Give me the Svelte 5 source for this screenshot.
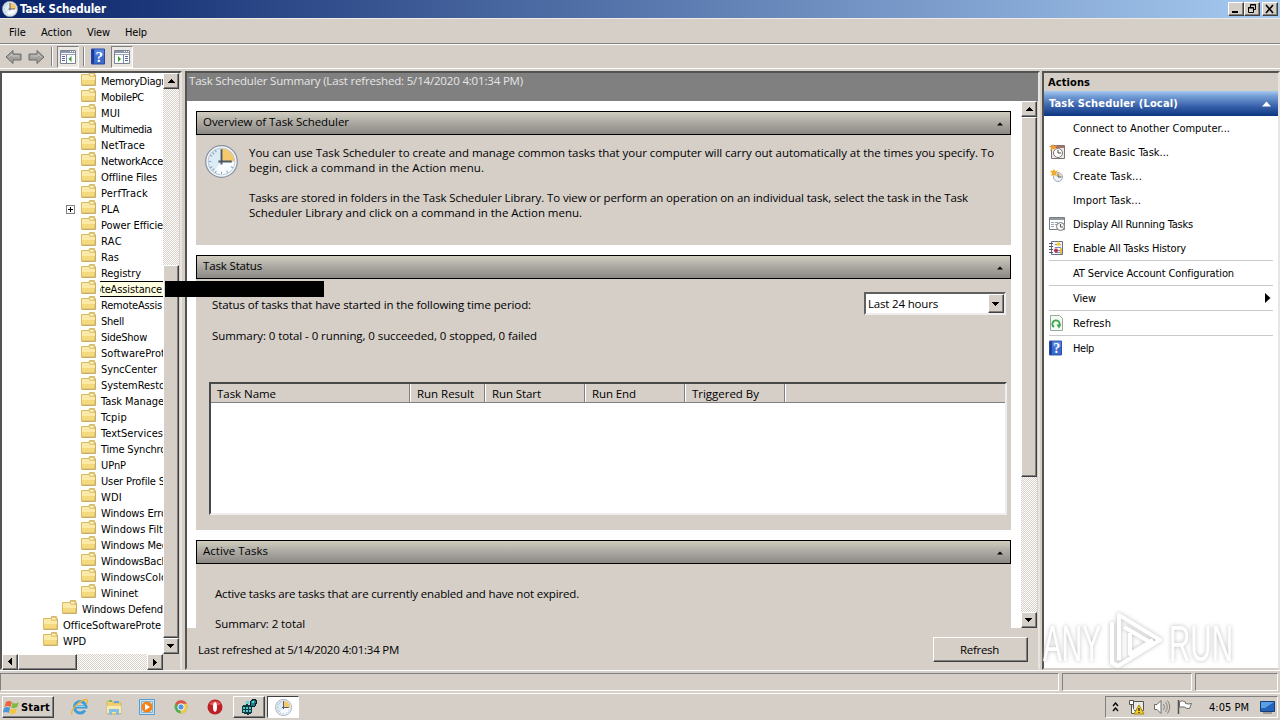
<script>
	const tree = [
		['MemoryDiagr', 64],
		['MobilePC', 43],
		['MUI', 19],
		['Multimedia', 51],
		['NetTrace', 44],
		['NetworkAcce', 62],
		['Offline Files', 56],
		['PerfTrack', 47],
		['PLA', 18],
		['Power Efficie', 62],
		['RAC', 21],
		['Ras', 18],
		['Registry', 40],
		['', 0],
		['RemoteAssis', 61],
		['Shell', 23],
		['SideShow', 46],
		['SoftwareProt', 64],
		['SyncCenter', 56],
		['SystemResto', 64],
		['Task Manage', 63],
		['Tcpip', 26],
		['TextServices', 62],
		['Time Synchro', 65],
		['UPnP', 25],
		['User Profile S', 64],
		['WDI', 21],
		['Windows Erro', 66],
		['Windows Filt', 62],
		['Windows Med', 67],
		['WindowsBack', 66],
		['WindowsColo', 66],
		['Wininet', 37],
		['Windows Defend', 81, 1],
		['OfficeSoftwareProte', 98, 0],
		['WPD', 23, 0],
	];

	const menus = [
		['File', 17],
		['Action', 31],
		['View', 23],
		['Help', 22],
	];

	const columns = [
		['Task Name', 59, 199],
		['Run Result', 57, 75],
		['Run Start', 49, 100],
		['Run End', 44, 100],
		['Triggered By', 67, 100],
	];

	const actions = [
		{ text: 'Connect to Another Computer...', width: 157 },
		{ text: 'Create Basic Task...', width: 96, icon: 'basic' },
		{ text: 'Create Task...', width: 69, icon: 'create' },
		{ text: 'Import Task...', width: 68 },
		{ text: 'Display All Running Tasks', width: 120, icon: 'running' },
		{ text: 'Enable All Tasks History', width: 113, icon: 'history' },
		{ text: 'AT Service Account Configuration', width: 161, line: true },
		{ text: 'View', width: 23, line: true, more: true },
		{ text: 'Refresh', width: 38, icon: 'refresh', line: true },
		{ text: 'Help', width: 21, icon: 'help', line: true },
	];

	// spread the letters so that a label takes the given width
	const fit = (node, width) => {
		if (!node.textContent) return;
		const natural = node.getBoundingClientRect().width;
		node.style.letterSpacing = `${(width - natural) / node.textContent.length}px`;
	};
</script>

{#snippet label(text, width)}
	<span class="label" use:fit={width}>{text}</span>
{/snippet}

{#snippet arrow(dir)}
	<svg class="arrow {dir}" width="8" height="8" viewBox="0 0 8 8" shape-rendering="crispEdges">
		<path d="M4 2h0l4 4H0z" transform="translate(0.5 0)" />
	</svg>
{/snippet}

{#snippet folder()}
	<svg class="folder" width="15" height="14" viewBox="0 0 15 14">
		<path d="M.5 2.500H8l.5-2h5l.5 2v10.500H.5z" fill="#f4d97f" stroke="#d8ba68" />
		<path d="M1 3h7.500v2H14v3H1z" fill="#faeaa6" />
		<path d="M8.500 1.500h4.500v2.500H8.500z" fill="#fff6cf" stroke="#c9a955" stroke-width=".6" />
		<path d="M.5 13.500h14V3" fill="none" stroke="#b8964a" stroke-width=".7" />
	</svg>
{/snippet}

{#snippet clock(size)}
	<svg width={size} height={size} viewBox="0 0 32 32">
		<circle cx="16" cy="16" r="15.300" fill="#f4f7fa" stroke="#8592a0" stroke-width="1.200" />
		<circle cx="16" cy="16" r="12.800" fill="#dcebf5" stroke="#b9c8d6" />
		<path d="M16 28.500A12.500 12.500 0 0 0 28.500 16H16L8 26z" fill="#f8fcff" />
		<path d="M16 16V3.500A12.500 12.500 0 0 1 28.500 16z" fill="#f5c86d" />
		<path d="M16 26v2M4 16h2M7.500 7.500 9 9M7.500 24.500 9 23M10 5l1 2M5 10l2 1M5 22l2-1M10 27l1-2M22 27l-1-2M27 22l-2-1" stroke="#829db6" />
		<path d="M16 4v15M13 16h13" stroke="#4b5968" stroke-width="1.800" />
	</svg>
{/snippet}

{#snippet help(w, h)}
	<svg width={w} height={h} viewBox="0 0 14 16">
		<path d="M.5.5h13v15H.5z" fill="#3c6bd0" stroke="#2547a0" />
		<path d="M1 1h2v14H1z" fill="#183b99" />
		<path d="M4 1h9v6H4z" fill="#5583df" />
		<text x="8.300" y="13" text-anchor="middle" font-family="Liberation Serif, serif" font-size="15" font-weight="bold" fill="#fff">?</text>
	</svg>
{/snippet}

{#snippet pane(dir)}
	<svg width="16" height="14" viewBox="0 0 16 14">
		<path d="M.5.5h15v13H.5z" fill="#fff" stroke="#7c8494" />
		<path d="M1 1h14v2H1z" fill="#8c96ad" />
		<path d="M10 1.500h1M12 1.500h1M14 1.500h1" stroke="#fff" />
		<path d="M1 4.500h14" stroke="#9ba3b8" />
		{#if dir === 'left'}
			<path d="M2 6.500h3M2 8.500h3M2 10.500h3" stroke="#5365a5" />
			<path d="M6.500 5v8" stroke="#8189a0" />
			<path d="M11.500 6v6L8.500 9z" fill="#3d9b3d" />
		{:else}
			<path d="M11 6.500h3M11 8.500h3M11 10.500h3" stroke="#5365a5" />
			<path d="M9.500 5v8" stroke="#8189a0" />
			<path d="M4 6v6l3-3z" fill="#3d9b3d" />
		{/if}
	</svg>
{/snippet}

{#snippet actionIcon(name)}
	{#if name === 'basic'}
		<svg width="16" height="16" viewBox="0 0 16 16">
			<path d="M2.500 1.500h13v13h-13z" fill="#eee9e5" stroke="#817374" />
			<path d="M3 2h12v2H3z" fill="#a87562" />
			<circle cx="9" cy="9" r="4.500" fill="#fff" stroke="#777" />
			<path d="M9 6v3h3" fill="none" stroke="#444" />
			<path d="m4 0 1 2 3-1-2 3 1 2-3-1-3 2 1-3-2-2 3 0z" fill="#efa036" />
		</svg>
	{:else if name === 'create'}
		<svg width="16" height="16" viewBox="0 0 16 16">
			<circle cx="9" cy="9" r="4.500" fill="#eef3f7" stroke="#a3abb4" />
			<path d="M9 9V5.500h1A4 4 0 0 1 12.500 9z" fill="#f1d086" />
			<path d="M9 5.500V9h3.500" fill="none" stroke="#555e69" />
			<path d="m5 1 1 2 3-.5L7 5l1 3-3-1-3 1 1-3-2-2 3-.5z" fill="#f0ac2b" />
		</svg>
	{:else if name === 'running'}
		<svg width="17" height="16" viewBox="0 0 17 16">
			<path d="M.5 1.500h15v12H.5z" fill="#fff" stroke="#777d84" />
			<path d="M1 2h14v2H1z" fill="#9399a0" />
			<path d="M2 6.500h3M6 6.500h3M2 8.500h3M6 8.500h2M2 10.500h3" stroke="#9ba4b7" />
			<circle cx="11.500" cy="10.500" r="4" fill="#f4f4f4" stroke="#777" />
			<path d="M11.500 8v3H14" fill="none" stroke="#555" />
		</svg>
	{:else if name === 'history'}
		<svg width="15" height="16" viewBox="0 0 15 16">
			<path d="M2.500 1.500h11v13h-11z" fill="#f2f4fa" stroke="#6a6e88" />
			<path d="M0 3.500h4M0 6.500h4M0 9.500h4M0 12.500h4" stroke="#55596b" />
			<path d="M6 4.500h6M6 7.500h6M6 10.500h6M6 12.500h6" stroke="#7b86bb" />
			<path d="M7 5.500 9.500 1 12 5.500z" fill="#f2ca28" />
			<circle cx="7" cy="10.500" r="2" fill="#bb3545" />
			<path d="M11 8h2v6h-2z" fill="#e5be46" />
		</svg>
	{:else if name === 'refresh'}
		<svg width="14" height="16" viewBox="0 0 14 16">
			<path d="M1.500.5h9l3 3v12h-12z" fill="#f4faf4" stroke="#9aaa9a" />
			<path d="M5 12A3.600 3.600 0 1 1 10 11" fill="none" stroke="#3fa64b" stroke-width="2" />
			<path d="M7.500 9.500h5L10 13.500z" fill="#3fa64b" />
		</svg>
	{:else if name === 'help'}
		{@render help(13, 16)}
	{/if}
{/snippet}

{#snippet cardHead(text, width)}
	<header class="card-head">
		{@render label(text, width)}
		<svg width="6" height="4" viewBox="0 0 6 4"><path d="M0 3.500 3 .5l3 3z" /></svg>
	</header>
{/snippet}

<div class="screen">
	<div class="titlebar">
		{@render clock(16)}
		<b>{@render label('Task Scheduler', 86)}</b>
		<div class="window-buttons">
			<button aria-label="Minimize" class="raised"><svg width="12" height="10"><path d="M2 7h6v2H2z" /></svg></button>
			<button aria-label="Restore" class="raised">
				<svg width="12" height="10" fill="none" stroke="#000"><path d="M4.500 3V.5h5v5H8M4 1h6M2.500 3.500h5v5h-5zM2 4h6" /></svg>
			</button>
			<button aria-label="Close" class="raised close"><svg width="12" height="10"><path d="m2 1 7 8M9 1 2 9" stroke="#000" stroke-width="1.600" /></svg></button>
		</div>
	</div>

	<nav class="menubar">
		{#each menus as [text, width]}
			{@render label(text, width)}
		{/each}
	</nav>

	<div class="toolbar">
		<svg width="17" height="16" viewBox="0 0 17 16"><path d="M1 8 8 1.500V5h8v6H8v3.500z" fill="#a3a19e" stroke="#6d6b69" /><path d="M4 8 7 5v2h7" fill="none" stroke="#c9c6c2" /></svg>
		<svg class="forward" width="17" height="16" viewBox="0 0 17 16"><path d="M16 8 9 1.500V5H1v6h8v3.500z" fill="#a3a19e" stroke="#6d6b69" /><path d="M3 7h7V5l3 3" fill="none" stroke="#c9c6c2" /></svg>
		<i></i>
		<span class="toggle">{@render pane('left')}</span>
		<i></i>
		<span class="tool-help">{@render help(14, 17)}</span>
		<span class="toggle">{@render pane('right')}</span>
	</div>

	<main>
		<section class="tree-pane">
			<div class="tree-row">
				<div class="tree">
					{#each tree as [text, width, level = 2]}
						<div class="node level{level}">
							{#if text === 'PLA'}
								<svg class="plus" width="9" height="9" shape-rendering="crispEdges"><path d="M.5.5h8v8h-8z" fill="#fff" stroke="#808080" /><path d="M2 4.500h5M4.500 2v5" stroke="#000" /></svg>
							{/if}
							{@render folder()}
							{@render label(text, width)}
						</div>
					{/each}
					<div class="tip"><span>{@render label('oteAssistance', 67)}</span></div>
				</div>
				<div class="scroll-v">
					<span class="raised end">{@render arrow('up')}</span>
					<span class="track tree-track"></span>
					<span class="raised thumb"></span>
					<span class="raised end">{@render arrow('down')}</span>
				</div>
			</div>
			<div class="scroll-h">
				<span class="raised end">{@render arrow('left')}</span>
				<span class="raised thumb"></span>
				<span class="track"></span>
				<span class="raised end">{@render arrow('right')}</span>
			</div>
			<div class="redacted"></div>
		</section>

		<section class="summary-pane">
			<header class="summary-head">{@render label('Task Scheduler Summary (Last refreshed: 5/14/2020 4:01:34 PM)', 334)}</header>
			<div class="summary-row">
				<div class="cards">
					<article class="overview">
						{@render cardHead('Overview of Task Scheduler', 146)}
						<div class="overview-body">
							{@render clock(33)}
							<div class="intro">
								<p>
									{@render label('You can use Task Scheduler to create and manage common tasks that your computer will carry out automatically at the times you specify. To', 745)}
									{@render label('begin, click a command in the Action menu.', 235)}
								</p>
								<p>
									{@render label('Tasks are stored in folders in the Task Scheduler Library. To view or perform an operation on an individual task, select the task in the Task', 719)}
									{@render label('Scheduler Library and click on a command in the Action menu.', 333)}
								</p>
							</div>
						</div>
					</article>

					<article class="status">
						{@render cardHead('Task Status', 59)}
						<div class="period">
							{@render label('Status of tasks that have started in the following time period:', 319)}
							<div class="select">
								{@render label('Last 24 hours', 70)}
								<span class="raised">{@render arrow('down')}</span>
							</div>
						</div>
						<div class="totals">{@render label('Summary: 0 total - 0 running, 0 succeeded, 0 stopped, 0 failed', 325)}</div>
						<div class="table">
							<div class="table-head">
								{#each columns as [text, width, size]}
									<div style="width: {size}px">{@render label(text, width)}</div>
								{/each}
							</div>
						</div>
					</article>

					<article class="active">
						{@render cardHead('Active Tasks', 65)}
						<div class="active-line">{@render label('Active tasks are tasks that are currently enabled and have not expired.', 364)}</div>
						<div class="active-total">{@render label('Summary: 2 total', 90)}</div>
					</article>
				</div>
				<div class="scroll-v">
					<span class="raised end">{@render arrow('up')}</span>
					<span class="raised summary-thumb"></span>
					<span class="track grow"></span>
					<span class="raised end">{@render arrow('down')}</span>
				</div>
			</div>
			<footer>
				{@render label('Last refreshed at 5/14/2020 4:01:34 PM', 201)}
				<button class="raised refresh">{@render label('Refresh', 39)}</button>
			</footer>
		</section>

		<aside>
			<div class="actions-title"><b>{@render label('Actions', 42)}</b></div>
			<div class="actions-group">
				<b>{@render label('Task Scheduler (Local)', 129)}</b>
				<svg width="10" height="6"><path d="M0 5.500 4.500.5 9 5.500z" fill="#fff" /></svg>
			</div>
			{#each actions as item}
				<div class="action" class:line={item.line}>
					<span class="action-icon">{@render actionIcon(item.icon)}</span>
					{@render label(item.text, item.width)}
					{#if item.more}
						<svg class="more" width="6" height="10"><path d="M0 0 5.500 5 0 10z" /></svg>
					{/if}
				</div>
			{/each}
			<svg class="watermark" width="210" height="72" viewBox="0 0 210 72">
				<g class="mark">
					<text x="5" y="57" textLength="58" lengthAdjust="spacingAndGlyphs">ANY</text>
					<text x="131" y="57" textLength="64" lengthAdjust="spacingAndGlyphs">RUN</text>
					<path d="M74 18v41l5 3M81 56V11l41 25-42 26-5-3M92 29v21l23-14M86 23l29 17" />
				</g>
			</svg>
		</aside>
	</main>

	<div class="statusbar"><span></span><span></span><span></span></div>

	<div class="taskbar">
		<button class="raised start">
			<svg width="17" height="17" viewBox="0 0 17 17">
				<path d="M3 3q3-2 6 0L7.500 8q-3-2-6 0z" fill="#ed653a" />
				<path d="M9.800 3.500q3 2 6-.5l-1.500 5q-3 2-6 .500z" fill="#7fba42" />
				<path d="M1.200 9q3-2 6 0l-1.500 5q-3-2-6 0z" fill="#4a96d7" />
				<path d="M8 9.300q3 2 6-.3l-1.500 5q-3 2-6 .300z" fill="#f6c43c" />
			</svg>
			<b>{@render label('Start', 29)}</b>
		</button>
		<div class="launch">
			<svg width="18" height="18" viewBox="0 0 18 18">
				<path d="M14 12.500A5.800 5.800 0 1 1 15 9H5" fill="none" stroke="#3d9cdc" stroke-width="3" />
				<path d="M5 8.500h9" stroke="#8dd0f1" />
				<path d="M1 16.500C-1 12 9 2 15 1.500c3 0 1 4 0 5" fill="none" stroke="#e6b83f" stroke-width="1.300" />
			</svg>
			<svg width="18" height="18" viewBox="0 0 18 18">
				<path d="M2 3h5l1 2h8v11H2z" fill="#efcf73" stroke="#d1ac4f" stroke-width=".7" />
				<path d="M4 2h3v2H4z" fill="#7bb957" /><path d="M9 3h5v2H9z" fill="#69a8d5" />
				<path d="M2 8h14v7H2z" fill="#f9e9ad" />
				<path d="M4 17v-6h10v6h-3v-3H7v3z" fill="#83bee4" />
			</svg>
			<svg width="18" height="18" viewBox="0 0 18 18">
				<path d="M1.500 1.500h15v15h-15z" fill="#cce5f5" stroke="#579bd0" />
				<path d="M3.500 3.500h11v11h-11z" fill="none" stroke="#7eb4da" />
				<circle cx="9" cy="9" r="5.600" fill="#f58218" /><path d="M7 5.700 12 9l-5 3.300z" fill="#fff" />
			</svg>
			<svg width="18" height="18" viewBox="0 0 18 18">
				<circle cx="9" cy="9" r="6.500" fill="#55ab55" />
				<path d="M9 9 3.200 5.700A6.700 6.700 0 0 1 15 6z" fill="#dc5548" />
				<path d="M9 9h6.500A6.500 6.500 0 0 1 8.500 15.500z" fill="#f1c945" /><path d="M9 5.800h6.200A6.500 6.500 0 0 1 15.500 9H9z" fill="#f1c945" />
				<circle cx="9" cy="9" r="3.200" fill="#5596df" stroke="#fff" />
			</svg>
			<svg width="18" height="18" viewBox="0 0 18 18">
				<circle cx="9" cy="9" r="7.500" fill="#bd1f25" /><path d="M3 6q6-6 12 0-6 3-12 0" fill="#de5a58" />
				<ellipse cx="9" cy="9" rx="2" ry="4.800" fill="#fff" />
			</svg>
		</div>
		<span class="raised task">
			<svg width="18" height="18" viewBox="0 0 18 18" shape-rendering="crispEdges">
				<path d="M2 8 7 6l5 2v7l-4 2-6-2z" fill="#0d3a42" />
				<path d="M3 9h2v2H3zM6 9h2v2H6zM3 12h2v2H3zM6 12h2v2H6zM9 9h2v2H9zM9 12h2v2H9z" fill="#55c6cc" />
				<path d="m10 4 4-3 3 2-2 5-4 0z" fill="#267783" stroke="#041f25" />
				<path d="M12 3h2v2h-2zM6 3h3v3H6z" fill="#5fd3d8" />
			</svg>
		</span>
		<span class="task pressed">{@render clock(17)}</span>
		<div class="tray">
			<svg width="7" height="10" fill="none" stroke="#000" stroke-width="1.300"><path d="m1 4 2.500-3L6 4M1 9l2.500-3L6 9" /></svg>
			<svg width="17" height="16" viewBox="0 0 17 16">
				<path d="M5.500 2.500h10v9h-10z" fill="#e8e8e4" stroke="#55534e" />
				<path d="M1.500 1.500h4v4h-4zM3.500 6v8.500h4" fill="#fff" stroke="#55534e" />
				<path d="m11 6 5 9H6z" fill="#f2ce27" stroke="#a88a10" /><path d="M11 9v3M11 13v1" stroke="#222" stroke-width="1.300" />
			</svg>
			<svg width="18" height="16" viewBox="0 0 18 16">
				<path d="M1.500 5.500H4l4-4v13l-4-4H1.500z" fill="#fff" stroke="#6c6a66" />
				<path d="M10.500 5q2 3 0 6M12.500 3q3.500 5 0 10M14.500 1.500q4.500 6.500 0 13" fill="none" stroke="#85827e" />
			</svg>
			<svg width="17" height="16" viewBox="0 0 17 16">
				<path d="M2.500 1v14" stroke="#55534e" stroke-width="1.500" />
				<path d="M3.500 2.500q3-1.500 6 .5v1.500q3 1 6 0l-2 5q-3 .500-5-1.500H3.500z" fill="#fff" stroke="#6c6a66" />
			</svg>
			<span class="time">{@render label('4:05 PM', 40)}</span>
			<svg width="16" height="14" viewBox="0 0 16 14">
				<path d="M.5 1.500h14v10H.5z" fill="#2365bd" stroke="#193e74" /><path d="M1 2h13L5 8H1z" fill="#5aa0e5" /><path d="M3 13h9" stroke="#62666b" />
			</svg>
		</div>
	</div>
</div>

<style>
	:global(body) {
		overflow: hidden;
	}

	* {
		box-sizing: border-box;
	}

	.screen {
		display: flex;
		flex-direction: column;
		width: 1280px;
		height: 720px;
		overflow: hidden;
		background: #d5cfc8;
		color: #000;
		font: 11px/15px "DejaVu Sans Condensed", "DejaVu Sans", sans-serif;
	}

	svg {
		display: block;
		flex: none;
	}

	.label {
		display: inline-block;
		flex: none;
		white-space: pre;
	}

	b .label {
		font-weight: bold;
	}

	button {
		padding: 0;
		font: inherit;
		color: inherit;
	}

	.raised {
		display: flex;
		align-items: center;
		justify-content: center;
		flex: none;
		background: #d5cfc8;
		border: 1px solid;
		border-color: #fff #404040 #404040 #fff;
		box-shadow: inset -1px -1px #808080;
	}

	.titlebar {
		display: flex;
		align-items: center;
		gap: 2px;
		height: 18px;
		padding: 0 2px;
		background: linear-gradient(90deg, #0a246a, #a6caf0);
		color: #fff;
		font-size: 11.500px;
	}

	.window-buttons {
		display: flex;
		margin-left: auto;
	}

	.window-buttons button {
		width: 16px;
		height: 14px;
	}

	.window-buttons .close {
		margin-left: 2px;
	}

	.menubar {
		display: flex;
		align-items: center;
		gap: 15px;
		height: 26px;
		padding: 3px 9px 0;
		border-top: 1px solid #eeeae5;
		border-bottom: 1px solid #808080;
	}

	.toolbar {
		display: flex;
		align-items: center;
		height: 25px;
		padding-left: 5px;
		border-top: 1px solid #fff;
		border-bottom: 1px solid #fff;
	}

	.forward {
		margin-left: 6px;
	}

	.toolbar i {
		width: 2px;
		height: 19px;
		margin: 0 4px 0 6px;
		border-left: 1px solid #808080;
		border-right: 1px solid #fff;
	}

	.toggle {
		display: flex;
		align-items: center;
		justify-content: center;
		width: 22px;
		height: 22px;
		border: 1px solid;
		border-color: #808080 #fff #fff #808080;
		background: #ebe8e4;
	}

	.toolbar i:nth-of-type(2) {
		margin: 0 6px 0 4px;
	}

	.tool-help {
		margin-right: 6px;
	}

	main {
		display: flex;
		height: 602px;
		border-top: 1px solid #d5cfc8;
		border-bottom: 1px solid #fff;
	}

	.tree-pane,
	.summary-pane,
	aside {
		position: relative;
		margin-top: 1px;
		border: 2px solid;
		border-color: #55534f #e8e4df #d5cfc8 #55534f;
	}

	.tree-pane {
		width: 182px;
	}

	.tree-row {
		display: flex;
		height: 581px;
	}

	.tree {
		position: relative;
		width: 161px;
		overflow: hidden;
		background: #fff;
	}

	.node {
		display: flex;
		gap: 5px;
		height: 16px;
		padding-left: 79px;
		line-height: 17px;
	}

	.folder {
		margin-top: -1px;
	}

	.level1 {
		padding-left: 60px;
	}

	.level0 {
		padding-left: 41px;
	}

	.plus {
		margin: 4px 1px 0 -15px;
	}

	.tip {
		position: absolute;
		left: 98px;
		top: 208px;
		width: 63px;
		height: 16px;
		overflow: hidden;
		border: solid #000;
		border-width: 1px 0;
		background: #ffffe1;
		line-height: 15px;
	}

	.tip > span {
		display: flex;
		margin-left: -5px;
	}

	.redacted {
		position: absolute;
		left: 163px;
		top: 208px;
		width: 159px;
		height: 16px;
		background: #000;
		z-index: 2;
	}

	.scroll-v {
		display: flex;
		flex-direction: column;
		width: 16px;
	}

	.scroll-h {
		display: flex;
		width: 161px;
		height: 16px;
	}

	.end {
		width: 16px;
		height: 16px;
	}

	.track {
		background: repeating-conic-gradient(#d5cfc8 0 25%, #fff 0 50%) 0 0 / 2px 2px;
	}

	.tree-track {
		height: 176px;
	}

	.scroll-v .thumb,
	.grow,
	.scroll-h .track {
		flex: 1;
	}

	.scroll-h .thumb {
		width: 59px;
	}

	.down {
		transform: rotate(180deg);
	}

	.left {
		transform: rotate(-90deg);
	}

	.right {
		transform: rotate(90deg);
	}

	.summary-pane {
		width: 855px;
		margin-left: 3px;
		font: 11.500px/15px "Open Sans", sans-serif;
	}

	.summary-head {
		height: 28px;
		padding: 0 2px;
		background: #808080;
		color: #e6e6e6;
	}

	.summary-row {
		display: flex;
		height: 527px;
	}

	.cards {
		width: 834px;
		padding: 10px 10px 0 9px;
		overflow: hidden;
		background: #fff;
	}

	article {
		margin-bottom: 10px;
		background: #d5cfc8;
	}

	.card-head {
		display: flex;
		align-items: center;
		justify-content: space-between;
		height: 24px;
		padding: 0 7px 3px 6px;
		border: 1px solid #000;
		background: linear-gradient(#d0cdbf, #aba8a2 50%, #8c8985);
	}

	.card-head svg {
		margin-top: 4px;
	}

	.overview {
		height: 134px;
	}

	.overview-body {
		display: flex;
		gap: 11px;
		padding: 10px 9px 0;
	}

	.intro {
		display: flex;
		flex-direction: column;
		gap: 15px;
	}

	p {
		display: flex;
		flex-direction: column;
		align-items: flex-start;
		margin: 0;
	}

	.status {
		height: 275px;
	}

	.period {
		display: flex;
		align-items: center;
		justify-content: space-between;
		height: 50px;
		padding: 0 5px 0 16px;
	}

	.select {
		display: flex;
		align-items: center;
		justify-content: space-between;
		width: 142px;
		height: 23px;
		margin-top: -1px;
		padding-left: 2px;
		border: 2px solid;
		border-color: #606060 #eee #eee #606060;
		background: #fff;
	}

	.select .raised {
		width: 16px;
		height: 19px;
	}

	.totals {
		height: 15px;
		margin-top: -1px;
		padding-left: 16px;
	}

	.table {
		height: 133px;
		margin: 39px 4px 0 13px;
		border: 2px solid;
		border-color: #484848 #eee #eee #484848;
		background: #fff;
	}

	.table-head {
		display: flex;
		height: 19px;
		border-bottom: 1px solid #808080;
		background: #d5cfc8;
	}

	.table-head div {
		padding: 2px 0 0 6px;
		border-right: 1px solid #808080;
		box-shadow: 1px 0 #fff;
	}

	.table-head div + div {
		padding-left: 7px;
	}

	.active {
		height: 120px;
	}

	.active-line,
	.active-total {
		padding: 22px 0 0 19px;
	}

	.active-total {
		padding-top: 15px;
	}

	.summary-thumb {
		height: 360px;
	}

	footer {
		display: flex;
		align-items: center;
		justify-content: space-between;
		height: 43px;
		padding: 0 10px 0 11px;
	}

	.refresh {
		width: 95px;
		height: 25px;
		margin-top: -1px;
		padding-right: 2px;
	}

	aside {
		width: 238px;
		margin-left: 2px;
		background: #fff;
	}

	.actions-title {
		height: 18px;
		padding: 2px 4px;
		background: #d5cfc8;
	}

	.actions-group {
		display: flex;
		align-items: center;
		justify-content: space-between;
		height: 25px;
		padding: 0 6px 0 5px;
		background: linear-gradient(#a6caf0 0, #759fd6 20%, #3b63ad 60%, #0a3680);
		color: #fff;
	}

	.action {
		display: flex;
		align-items: center;
		height: 24px;
		margin: 0 5px;
	}

	.action.line {
		height: 25px;
		border-top: 1px solid #c9c9c9;
	}

	.action-icon {
		width: 24px;
	}

	.more {
		margin: 0 2px 0 auto;
	}

	.watermark {
		position: absolute;
		left: -6px;
		top: 531px;
	}

	.mark {
		fill: #fff;
		filter: drop-shadow(0 0 2px #bbb);
		font: 50px "Liberation Sans", sans-serif;
	}

	.mark path {
		fill: none;
		stroke: #fff;
		stroke-width: 4;
		stroke-linejoin: round;
	}

	.statusbar {
		display: flex;
		gap: 3px;
		height: 22px;
		padding: 2px 2px 2px 0;
	}

	.statusbar span {
		width: 130px;
		border: 1px solid;
		border-color: #808080 #fff #fff #808080;
	}

	.statusbar span:first-child {
		width: 1059px;
	}

	.statusbar span:last-child {
		width: 83px;
	}

	.taskbar {
		display: flex;
		flex: 1;
		align-items: flex-start;
		padding: 2px 2px 0;
		border-top: 1px solid #fff;
	}

	.start {
		width: 52px;
		height: 22px;
		gap: 1px;
		padding-right: 3px;
	}

	.launch {
		display: flex;
		gap: 15.700px;
		width: 179px;
		padding: 2px 0 0 17px;
	}

	.task {
		display: flex;
		align-items: center;
		justify-content: center;
		width: 32px;
		height: 22px;
	}

	.pressed {
		margin-left: 2px;
		border: 1px solid;
		border-color: #404040 #fff #fff #404040;
		background: #fff;
	}

	.tray {
		display: flex;
		align-items: center;
		width: 173px;
		height: 22px;
		gap: 6px;
		margin-left: auto;
		padding-left: 6px;
		border: 1px solid;
		border-color: #808080 #fff #fff #808080;
	}

	.time {
		margin: 0 5px 0 10px;
	}

	.tray svg:nth-child(2),
	.tray svg:nth-child(3) {
		margin-left: 3px;
		margin-right: -1px;
	}
</style>
